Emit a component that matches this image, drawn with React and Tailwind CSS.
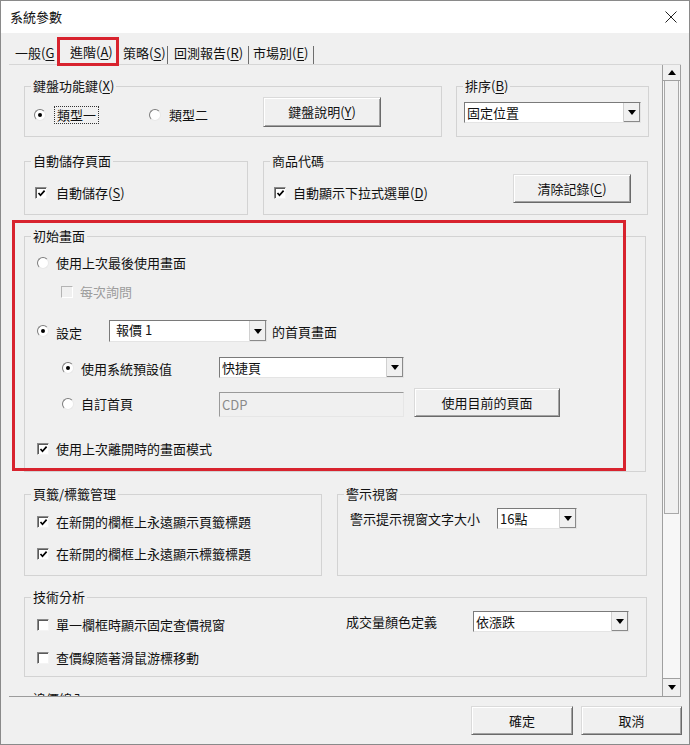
import React from "react";

function Mn({ t, k, tail = ")" }) {
  return (
    <>
      {t}(<span className="underline underline-offset-[2px]">{k}</span>
      {tail}
    </>
  );
}

function Tri({ up = false }) {
  return (
    <svg width="8" height="5" viewBox="0 0 8 5">
      <polygon points={up ? "0,5 8,5 4,0" : "0,0 8,0 4,5"} fill="#000" />
    </svg>
  );
}

function Group({ title, className, children }) {
  return (
    <fieldset className={`border border-[#d3d3d3] shrink-0 ${className}`}>
      <legend className="ml-[6px] px-[2px] leading-[16px]">{title}</legend>
      {children}
    </fieldset>
  );
}

function Radio({ checked = false }) {
  return (
    <span className="w-[12px] h-[12px] shrink-0 rounded-full bg-white border border-t-[#7c7c7c] border-l-[#7c7c7c] border-r-[#e8e8e8] border-b-[#e8e8e8] flex items-center justify-center">
      {checked && <span className="w-[4px] h-[4px] rounded-full bg-black" />}
    </span>
  );
}

function Check({ checked = false, disabled = false }) {
  return (
    <span
      className={`w-[12px] h-[12px] shrink-0 border flex items-center justify-center ${
        disabled
          ? "bg-[#f0f0f0] border-t-[#b4b4b4] border-l-[#b4b4b4] border-r-white border-b-white"
          : "bg-white border-t-[#8a8a8a] border-l-[#8a8a8a] border-r-[#f4f4f4] border-b-[#f4f4f4] shadow-[inset_1px_1px_0_#5a5a5a]"
      }`}
    >
      {checked && (
        <svg width="9" height="8" viewBox="0 0 9 8">
          <path d="M1.5 4 L3.5 6.2 L7.6 1.6" stroke="#000" strokeWidth="1.7" fill="none" />
        </svg>
      )}
    </span>
  );
}

function Button({ className, children }) {
  return (
    <div
      className={`shrink-0 flex items-center justify-center bg-[#f0f0f0] border border-t-[#dadada] border-l-[#dadada] border-r-[#6a6a6a] border-b-[#6a6a6a] shadow-[inset_1px_1px_0_#fff,inset_-1px_-1px_0_#a3a3a3] leading-[16px] ${className}`}
    >
      {children}
    </div>
  );
}

function Select({ value, className, textPad = "pl-[2px]" }) {
  return (
    <div
      className={`shrink-0 flex bg-white border border-t-[#7a7a7a] border-l-[#7a7a7a] border-r-[#e4e4e4] border-b-[#e4e4e4] ${className}`}
    >
      <span className={`flex-1 flex items-center leading-[16px] ${textPad}`}>{value}</span>
      <div className="w-[17px] flex items-center justify-center bg-[#f0f0f0] border-l border-l-[#d0d0d0] shadow-[inset_-1px_-1px_0_#8a8a8a]">
        <Tri />
      </div>
    </div>
  );
}

function Sep() {
  return <span className="w-[1px] h-[18px] bg-[#6e6e6e] shrink-0 self-end" />;
}

export default function App() {
  return (
    <div className="relative w-[690px] h-[745px] border border-[#8a8a8a] bg-[#f0f0f0] flex flex-col overflow-hidden text-[13px] text-[#111] font-['Noto_Sans_CJK_TC','Noto_Sans_CJK_SC',sans-serif]">
      {/* title bar */}
      <div className="h-[32px] shrink-0 bg-white flex items-center justify-between pl-[9px] pr-[12px]">
        <span className="leading-[16px]">系統參數</span>
        <svg width="12" height="12" viewBox="0 0 12 12">
          <path d="M0.5 0.5 L11.5 11.5 M11.5 0.5 L0.5 11.5" stroke="#222" strokeWidth="1" />
        </svg>
      </div>

      {/* tabs */}
      <div className="h-[31px] shrink-0 flex items-end pl-[14px]">
        <span className="w-[42px] h-[22px] flex items-center leading-[16px]">
          一般(<span className="underline underline-offset-[2px]">G</span>
        </span>
        <span className="relative z-10 -mb-[2px] w-[62px] h-[29px] border-[3px] border-[#d8232e] pl-[10px] flex items-center leading-[16px]">
          <Mn t="進階" k="A" />
        </span>
        <span className="w-[48px] h-[22px] pl-[4px] flex items-center leading-[16px]">
          <Mn t="策略" k="S" />
        </span>
        <Sep />
        <span className="w-[80px] h-[22px] pl-[6px] flex items-center leading-[16px]">
          <Mn t="回測報告" k="R" />
        </span>
        <Sep />
        <span className="w-[64px] h-[22px] pl-[4px] flex items-center leading-[16px]">
          <Mn t="市場別" k="E" />
        </span>
        <Sep />
      </div>

      {/* tab panel */}
      <div className="ml-[8px] w-[672px] h-[633px] shrink-0 flex border-t border-b border-t-[#d6d6d6] border-b-[#9c9c9c]">
        <div className="w-[653px] h-full overflow-hidden pl-[15px] pt-[13px] flex flex-col">
          {/* row 1 */}
          <div className="flex gap-[14px] shrink-0">
            <Group title={<Mn t="鍵盤功能鍵" k="X" />} className="w-[418px] h-[59px]">
              <div className="flex items-start pl-[9px]">
                <div className="w-[115px] h-[18px] mt-[12px] flex items-center gap-[8px]">
                  <Radio checked />
                  <span className="border border-dotted border-[#333] px-[2px] leading-[16px]">類型一</span>
                </div>
                <div className="w-[114px] h-[18px] mt-[12px] flex items-center gap-[8px]">
                  <Radio />
                  <span className="leading-[16px]">類型二</span>
                </div>
                <Button className="mt-[3px] w-[118px] h-[30px]">
                  <Mn t="鍵盤說明" k="Y" />
                </Button>
              </div>
            </Group>
            <Group title={<Mn t="排序" k="B" />} className="w-[193px] h-[59px]">
              <div className="pl-[7px] pt-[8px]">
                <Select value="固定位置" className="w-[177px] h-[21px]" />
              </div>
            </Group>
          </div>

          {/* row 2 */}
          <div className="flex gap-[15px] mt-[16px] shrink-0">
            <Group title="自動儲存頁面" className="w-[224px] h-[62px]">
              <div className="pl-[10px] mt-[16px] flex items-center gap-[9px]">
                <Check checked />
                <span className="leading-[16px]">
                  <Mn t="自動儲存" k="S" />
                </span>
              </div>
            </Group>
            <Group title="商品代碼" className="w-[385px] h-[62px]">
              <div className="flex items-start pl-[10px] pr-[16px]">
                <div className="mt-[16px] flex items-center gap-[7px]">
                  <Check checked />
                  <span className="leading-[16px]">
                    <Mn t="自動顯示下拉式選單" k="D" />
                  </span>
                </div>
                <Button className="ml-auto mt-[5px] w-[118px] h-[29px]">
                  <Mn t="清除記錄" k="C" />
                </Button>
              </div>
            </Group>
          </div>

          {/* 初始畫面 */}
          <Group title="初始畫面" className="mt-[13px] w-[622px] h-[244px]">
            <div className="flex flex-col">
              <div className="mt-[11px] pl-[12px] flex items-center gap-[7px] leading-[16px]">
                <Radio />
                <span>使用上次最後使用畫面</span>
              </div>
              <div className="mt-[13px] pl-[36px] flex items-center gap-[7px] leading-[16px] text-[#9c9c9c]">
                <Check disabled />
                <span>每次詢問</span>
              </div>
              <div className="mt-[20px] pl-[12px] h-[22px] flex items-center leading-[16px]">
                <Radio checked />
                <span className="ml-[7px] w-[53px] pt-[3px]">設定</span>
                <Select value="報價 1" className="w-[158px] h-[22px]" textPad="pl-[6px] pb-[2px]" />
                <span className="ml-[5px] pt-[2px]">的首頁畫面</span>
              </div>
              <div className="mt-[15px] pl-[37px] h-[21px] flex items-center leading-[16px]">
                <Radio checked />
                <span className="ml-[7px] w-[138px] pt-[2px]">使用系統預設值</span>
                <Select value="快捷頁" className="w-[185px] h-[21px]" />
              </div>
              <div className="mt-[10px] pl-[37px] flex items-end leading-[16px]">
                <div className="mb-[5px] flex items-center">
                  <Radio />
                  <span className="ml-[7px] w-[138px]">自訂首頁</span>
                </div>
                <div className="w-[185px] h-[25px] bg-[#f0f0f0] border border-t-[#9a9a9a] border-l-[#9a9a9a] border-r-[#e6e6e6] border-b-[#e6e6e6] pl-[2px] flex items-center text-[#8a8a8a]">
                  CDP
                </div>
                <Button className="ml-[10px] w-[146px] h-[29px]">使用目前的頁面</Button>
              </div>
              <div className="mt-[24px] pl-[12px] flex items-center gap-[7px] leading-[16px]">
                <Check checked />
                <span>使用上次離開時的畫面模式</span>
              </div>
            </div>
          </Group>

          {/* row 4 */}
          <div className="flex gap-[15px] mt-[14px] shrink-0">
            <Group title="頁籤/標籤管理" className="w-[298px] h-[90px]">
              <div className="pl-[12px] flex flex-col leading-[16px]">
                <div className="mt-[12px] flex items-center gap-[7px]">
                  <Check checked />
                  <span>在新開的欄框上永遠顯示頁籤標題</span>
                </div>
                <div className="mt-[16px] flex items-center gap-[7px]">
                  <Check checked />
                  <span>在新開的欄框上永遠顯示標籤標題</span>
                </div>
              </div>
            </Group>
            <Group title="警示視窗" className="w-[310px] h-[90px]">
              <div className="pl-[12px] mt-[6px] flex items-center leading-[16px]">
                <span className="w-[147px]">警示提示視窗文字大小</span>
                <Select value="16點" className="w-[80px] h-[21px]" />
              </div>
            </Group>
          </div>

          {/* 技術分析 */}
          <Group title="技術分析" className="mt-[13px] w-[623px] h-[88px]">
            <div className="flex leading-[16px]">
              <div className="w-[321px] pl-[12px] pt-[12px] flex flex-col">
                <div className="flex items-center gap-[7px]">
                  <Check />
                  <span>單一欄框時顯示固定查價視窗</span>
                </div>
                <div className="mt-[17px] flex items-center gap-[7px]">
                  <Check />
                  <span>查價線隨著滑鼠游標移動</span>
                </div>
              </div>
              <div className="pt-[6px] flex items-start">
                <span className="w-[127px] pt-[3px]">成交量顏色定義</span>
                <Select value="依漲跌" className="w-[156px] h-[21px]" />
              </div>
            </div>
          </Group>

          <Group title="追價線入" className="mt-[14px] w-[623px] h-[60px]">
            <div />
          </Group>
        </div>

        {/* scrollbar */}
        <div className="w-[19px] h-full flex flex-col border-l border-r border-[#a0a0a0] bg-[#f7f7f7]">
          <div className="h-[16px] shrink-0 flex items-center justify-center bg-[#f0f0f0] border-b border-[#a0a0a0]">
            <Tri up />
          </div>
          <div className="h-[433px] shrink-0 mx-[1px] bg-[#f0f0f0] border-l border-r border-b border-[#a8a8a8]" />
          <div className="flex-1" />
          <div className="h-[18px] shrink-0 flex items-center justify-center bg-[#f0f0f0] border-t border-[#a0a0a0]">
            <Tri />
          </div>
        </div>
      </div>

      {/* footer */}
      <div className="flex-1 flex justify-end items-start gap-[8px] pr-[7px] pt-[9px]">
        <Button className="w-[102px] h-[29px]">確定</Button>
        <Button className="w-[101px] h-[29px]">取消</Button>
      </div>

      {/* highlight */}
      <div className="pointer-events-none absolute left-[11px] top-[219px] w-[614px] h-[251px] border-[3px] border-[#d8232e]" />
    </div>
  );
}
